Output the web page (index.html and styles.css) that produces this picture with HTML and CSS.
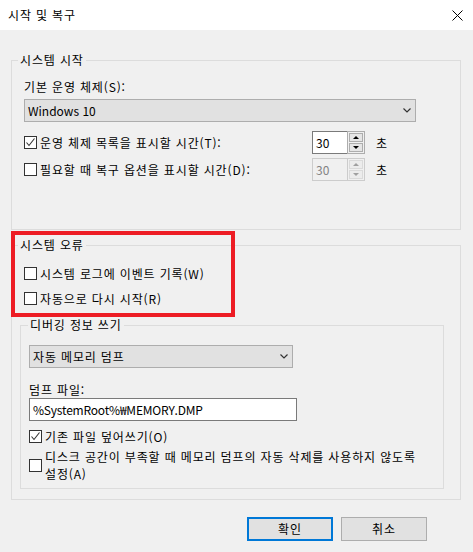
FILE: index.html
```html
<!DOCTYPE html>
<html lang="ko">
<head>
<meta charset="utf-8">
<title>시작 및 복구</title>
<link rel="stylesheet" href="styles.css">
</head>
<body>
<div class="titlebar">
  <span class="title">시작 및 복구</span>
  <svg class="close" width="11" height="11" viewBox="0 0 11 11"><path d="M0.5 0.5L10.5 10.5M10.5 0.5L0.5 10.5" stroke="#000" stroke-width="1" fill="none"/></svg>
</div>
<div class="content">
  <fieldset class="group g-start">
    <legend>시스템 시작</legend>
    <div class="field-label">기본 운영 체제(S):</div>
    <div class="combo combo-os">
      <span class="latin">Windows 10</span>
      <svg class="chev" width="8" height="5" viewBox="0 0 8 5"><path d="M0.5 0.5L4 4L7.5 0.5" stroke="#333" stroke-width="1.2" fill="none"/></svg>
    </div>
    <div class="spin-row row1">
      <div class="check spin-label">
        <span class="box"><svg width="11" height="11" viewBox="0 0 11 11"><path d="M1.5 5.5L4 8.5L9.5 1.5" stroke="#333" stroke-width="1.1" fill="none"/></svg></span>
        <span>운영 체제 목록을 표시할 시간(T):</span>
      </div>
      <div class="spin">
        <span class="spin-val latin">30</span>
        <span class="spin-btns">
          <span class="sb"><span class="tri up"></span></span>
          <span class="sb"><span class="tri down"></span></span>
        </span>
      </div>
      <span class="unit">초</span>
    </div>
    <div class="spin-row row2">
      <div class="check spin-label">
        <span class="box"></span>
        <span>필요할 때 복구 옵션을 표시할 시간(D):</span>
      </div>
      <div class="spin disabled">
        <span class="spin-val latin">30</span>
        <span class="spin-btns">
          <span class="sb"><span class="tri up"></span></span>
          <span class="sb"><span class="tri down"></span></span>
        </span>
      </div>
      <span class="unit">초</span>
    </div>
  </fieldset>

  <fieldset class="group g-error">
    <legend>시스템 오류</legend>
    <div class="check err1">
      <span class="box"></span>
      <span>시스템 로그에 이벤트 기록(W)</span>
    </div>
    <div class="check err2">
      <span class="box"></span>
      <span>자동으로 다시 시작(R)</span>
    </div>

    <fieldset class="group g-debug">
      <legend>디버깅 정보 쓰기</legend>
      <div class="combo combo-dump">
        <span>자동 메모리 덤프</span>
        <svg class="chev" width="8" height="5" viewBox="0 0 8 5"><path d="M0.5 0.5L4 4L7.5 0.5" stroke="#333" stroke-width="1.2" fill="none"/></svg>
      </div>
      <div class="field-label dump-label">덤프 파일:</div>
      <div class="textbox path">%SystemRoot%₩MEMORY.DMP</div>
      <div class="check over">
        <span class="box"><svg width="11" height="11" viewBox="0 0 11 11"><path d="M1.5 5.5L4 8.5L9.5 1.5" stroke="#333" stroke-width="1.1" fill="none"/></svg></span>
        <span>기존 파일 덮어쓰기(O)</span>
      </div>
      <div class="check disk">
        <span class="box"></span>
        <span>디스크 공간이 부족할 때 메모리 덤프의 자동 삭제를 사용하지 않도록<br>설정(A)</span>
      </div>
    </fieldset>
  </fieldset>

  <div class="buttons">
    <button class="btn primary">확인</button>
    <button class="btn">취소</button>
  </div>
</div>
<div class="highlight"></div>
</body>
</html>
```

FILE: styles.css
```css
* { box-sizing: border-box; }
html, body { margin: 0; padding: 0; }
body {
  width: 473px;
  height: 552px;
  background: #f0f0f0;
  font-family: "Noto Sans CJK KR", "Noto Sans", sans-serif;
  font-size: 12px;
  letter-spacing: 0.85px;
  color: #000;
  overflow: hidden;
  position: relative;
}
.latin { letter-spacing: 0; }
.path { letter-spacing: -0.2px; }
.titlebar {
  height: 30px;
  background: #fff;
  display: flex;
  align-items: center;
  justify-content: space-between;
  padding: 0 10px 0 8px;
}
.title { line-height: 16px; }
.close { display: block; }

.content { padding: 22px 12px 0 11px; }

.group {
  margin: 0;
  min-width: 0;
  border: 1px solid #dcdcdc;
  padding: 11px 12px 48px 12px;
}
.group > legend {
  padding: 0 2px;
  margin-left: -6px;
  line-height: 16px;
}
.field-label { line-height: 16px; }

.combo {
  height: 23px;
  border: 1px solid #adadad;
  background: #e1e1e1;
  display: flex;
  align-items: center;
  justify-content: space-between;
  padding: 0 4px 0 3px;
  line-height: 16px;
}
.chev { display: block; }
.combo-os { margin-top: 4px; width: 392px; }

.spin-row { display: flex; align-items: center; height: 23px; }
.row1 { margin-top: 9px; }
.row2 { margin-top: 4px; }
.spin-label { flex: 0 0 288px; }

.check { display: flex; align-items: center; line-height: 17px; }
.box {
  width: 13px;
  height: 13px;
  border: 1px solid #333;
  background: #fff;
  flex: none;
  margin-right: 3px;
  display: flex;
}
.box svg { display: block; }

.spin { display: flex; width: 53px; height: 23px; }
.spin-val {
  width: 35px;
  border: 1px solid #7a7a7a;
  border-right: none;
  background: #fff;
  padding-left: 3px;
  line-height: 21px;
}
.spin-btns {
  width: 18px;
  border: 1px solid #adadad;
  background: #f0f0f0;
  padding: 1px;
  display: flex;
  flex-direction: column;
  gap: 1px;
}
.sb {
  flex: 1;
  border: 1px solid #adadad;
  background: #e5e5e5;
  display: flex;
  align-items: center;
  justify-content: center;
}
.tri { width: 0; height: 0; border-left: 3px solid transparent; border-right: 3px solid transparent; }
.tri.up { border-bottom: 3px solid #000; }
.tri.down { border-top: 3px solid #000; }
.spin.disabled .spin-val { border-color: #cccccc; background: #f0f0f0; color: #838383; }
.spin.disabled .spin-btns { border-color: #cccccc; }
.spin.disabled .sb { border-color: #dadada; background: #ececec; }
.spin.disabled .tri.up { border-bottom-color: #a0a0a0; }
.spin.disabled .tri.down { border-top-color: #a0a0a0; }
.unit { margin-left: 11px; }

.g-error { margin-top: 7px; padding: 12px 12px 10px 12px; }
.err2 { margin-top: 8px; }

.g-debug {
  width: 424px;
  margin: 10px 0 0 -4px;
  padding: 12px 8px 6px 8px;
}
.g-debug > legend { margin-left: -1px; }
.combo-dump { width: 264px; }
.dump-label { margin-top: 14px; }
.textbox {
  width: 268px;
  height: 23px;
  border: 1px solid #7a7a7a;
  background: #fff;
  padding-left: 3px;
  line-height: 21px;
}
.over { margin-top: 7px; }
.disk { margin-top: 3px; }

.buttons {
  display: flex;
  justify-content: flex-end;
  gap: 8px;
  margin-top: 17px;
  padding-right: 34px;
}
.btn {
  width: 86px;
  height: 24px;
  border: 1px solid #adadad;
  background: #e1e1e1;
  font-family: inherit;
  font-size: 12px;
  letter-spacing: 0.85px;
  color: #000;
  padding: 0;
  line-height: 16px;
}
.btn.primary { border: 2px solid #0078d7; }

.highlight {
  position: absolute;
  left: 11px;
  top: 231px;
  width: 224px;
  height: 86px;
  border: 4px solid #ed1c24;
}
```
